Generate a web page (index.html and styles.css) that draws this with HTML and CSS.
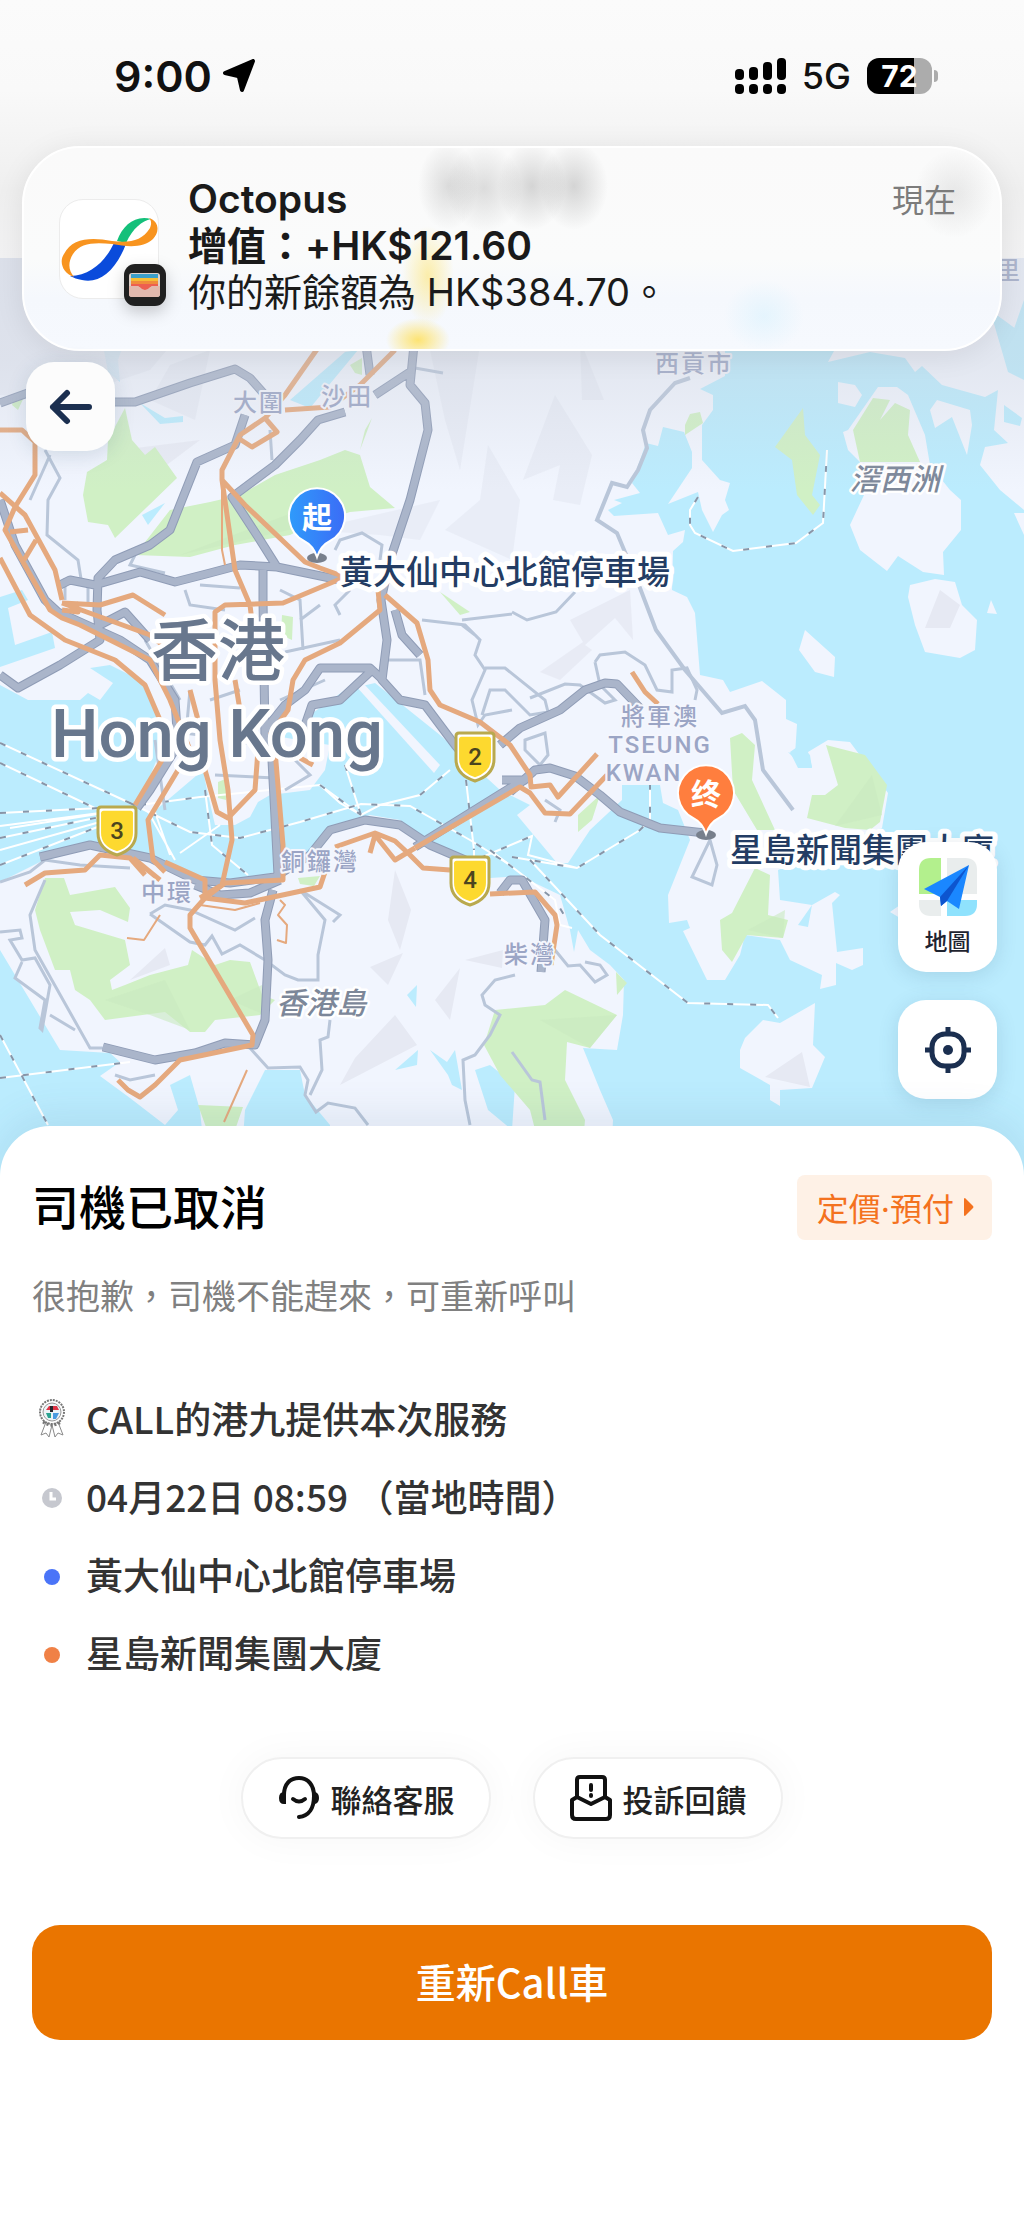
FILE: index.html
```html
<!DOCTYPE html>
<html lang="zh-HK">
<head>
  <meta charset="UTF-8">
  <title>司機已取消</title>
  <meta name="viewport" content="width=device-width, initial-scale=1.0">
  <link rel="stylesheet" href="styles.css">
</head>
<body>
  <main class="screen">
    <section class="map-area">
      <svg class="map" viewBox="0 0 1024 1180" role="img" aria-label="香港地圖">
        <defs>
          <linearGradient id="pinBlue" x1="0" y1="0" x2="1" y2="0">
            <stop offset="0" stop-color="#2f9bfb"/>
            <stop offset="1" stop-color="#3b6cf6"/>
          </linearGradient>
          <path id="shield" d="M-19 -21 Q-19 -24 -16 -24 H16 Q19 -24 19 -21 V2 Q19 18 0 24 Q-19 18 -19 2 Z"/>
          <path id="pin" d="M0 41 C-3 32 -7 28 -13 25 A28 28 0 1 1 13 25 C7 28 3 32 0 41 Z"/>
          <path id="highwayNorth" d="M0 403 L50 385 M110 402 L135 402 190 383 235 369 250 378 265 395 M245 415 L235 445 197 462 170 530 150 545 115 560 98 578 97 610 100 640 60 665 18 688 0 675 M366 345 L370 375 M414 345 L410 385 425 403 428 430 410 500 390 560 381 600 387 640 382 680 400 700 425 705 455 745 480 775 M410 372 L375 395 M345 412 L318 420 300 440 275 465 232 497 260 540 277 567 340 580 M60 585 L70 580 95 585 140 572 175 582 210 573 240 565 277 567 M263 570 V600 L265 740 272 760 278 875 M0 500 L15 545 45 600 58 612 120 640 150 660 175 700 178 745 150 790 137 808 M100 625 L125 612 150 640"/>
          <path id="highwaySouth" d="M265 730 L285 705 305 690 320 668 370 668 383 680 M300 740 L312 705 340 700 370 672 M395 610 L402 635 420 655 M500 745 L520 728 560 710 585 690 605 683 617 684 640 708 M510 792 L535 770 550 768 575 776 600 795 620 812 660 828 705 833 M502 780 L525 780 510 788 415 847 M40 857 L90 845 150 858 195 880 230 883 275 877 310 855 330 830 365 820 400 825 430 845 465 860 M195 885 L220 895 250 893 280 880 M500 893 L510 880 522 880 545 920 541 972 M273 890 L265 920 268 960 265 1020 255 1045 225 1043 195 1053 155 1060 103 1047"/>
        </defs>
        <rect width="1024" height="1180" fill="#bbecfe"/>

        <!-- land -->
        <g fill="#f1f5fe">
          <path d="M0 240 H725 V376 L700 389 713 395 713 410 702 425 702 460 720 480 730 483 725 500 729 510 722 515 713 532 702 510 698 492 668 504 692 468 692 452 684 432 663 427 658 446 646 443 632 483 640 493 614 500 622 503 608 510 614 516 658 513 668 535 685 530 683 542 673 551 672 590 687 597 695 613 700 675 723 680 730 692 762 681 786 700 786 719 797 724 795 755 788 752 804 768 812 767 808 752 828 740 850 742 888 793 882 828 868 832 778 870 780 900 812 905 798 925 808 927 812 905 835 892 840 895 832 903 837 952 863 948 863 965 852 970 836 963 836 985 820 989 822 975 790 960 780 940 745 935 740 955 725 980 707 980 683 931 690 928 687 920 669 923 668 895 690 840 678 810 663 803 660 785 622 785 622 800 590 830 568 863 557 863 517 815 530 805 500 790 440 735 375 683 345 690 300 722 270 735 310 742 330 745 325 770 310 790 270 795 258 802 250 817 235 825 215 825 207 790 203 770 150 815 138 805 165 740 157 712 140 680 110 665 90 668 113 683 100 700 88 693 80 700 28 700 0 685 Z"/>
          <path d="M355 685 L363 683 440 765 434 773 Z"/>
          <path d="M0 882 L40 862 90 848 150 862 200 885 235 882 275 872 300 860 330 830 370 815 400 820 430 845 470 860 490 878 520 876 560 895 570 930 574 952 578 930 590 950 610 965 624 980 623 1015 617 1050 583 1048 600 1090 613 1120 610 1180 430 1180 330 1180 330 1125 305 1095 300 1070 265 1070 245 1110 240 1180 207 1180 200 1110 190 1075 170 1085 178 1110 165 1125 130 1098 100 1076 120 1062 110 1053 60 1050 30 1000 0 950 Z"/>
          <path d="M725 240 H1024 V300 L1010 340 1024 362 V510 L1000 490 980 465 985 447 1008 443 994 430 998 390 985 397 942 385 922 366 915 372 905 358 870 352 828 362 840 340 725 330 Z"/>
          <path d="M838 382 L855 385 862 395 855 407 838 403 Z M930 410 L937 400 970 410 972 425 967 455 952 417 935 428 Z"/>
          <path d="M848 430 L878 387 897 387 908 395 925 435 930 465 950 490 961 500 961 530 943 552 944 575 923 572 898 556 887 571 860 550 850 525 864 495 860 462 848 450 843 432 Z"/>
          <path d="M910 585 L935 579 955 582 962 605 977 620 975 650 960 658 925 652 915 625 908 597 Z M805 630 L835 657 834 677 815 672 799 650 Z M991 600 L997 614 987 613 Z M890 912 L900 905 900 918 Z M1014 513 H1024 V535 Z"/>
          <path d="M740 1050 L745 1038 763 1020 780 1023 815 1003 813 1045 825 1057 812 1088 780 1090 780 1106 770 1100 770 1085 740 1068 Z"/>
        </g>
        <g fill="#bbecfe">
          <path d="M0 597 L22 590 28 600 8 608 15 645 52 632 55 648 0 667 Z M102 340 L125 340 118 360 120 382 108 372 Z M140 403 L165 418 183 416 183 422 160 424 Z"/>
          <path d="M800 745 L810 755 812 768 798 768 790 752 Z M407 995 L417 985 416 1007 Z M395 1070 L418 1050 417 1065 Z M430 1050 L447 1062 455 1050 462 1090 452 1085 448 1075 Z M475 1070 L490 1065 515 1085 512 1130 488 1110 Z"/>
          <path d="M345 352 L358 350 310 408 290 400 Z M142 515 L165 503 148 525 Z M990 310 L1024 335 V380 L1008 372 Z M1004 405 L1022 418 1020 426 1004 422 Z"/>
        </g>

        <!-- relief -->
        <g fill="#e6e9f3">
          <path d="M0 240 H260 L150 370 60 400 0 395 Z" opacity=".7"/>
          <path d="M170 365 L210 350 195 420 150 400 Z M430 350 L480 345 460 470 445 420 Z M488 445 L520 500 512 560 445 530 480 500 Z M555 395 L592 455 580 505 553 500 560 465 523 480 Z M580 340 L604 400 582 400 Z M310 530 L440 500 420 540 380 535 Z" opacity=".7"/>
          <path d="M570 620 L630 590 633 640 615 618 585 645 592 650 560 680 540 672 583 642 Z M120 450 L200 440 160 470 Z" opacity=".8"/>
          <path d="M395 870 L411 910 400 950 388 920 Z M370 967 L403 953 388 985 Z M465 960 L503 950 502 968 Z M395 1015 L417 1045 340 1085 355 1058 Z M435 1000 L460 968 450 1020 Z M130 980 L165 948 170 965 Z M940 590 L960 605 950 628 925 628 Z M765 1077 L802 1052 810 1087 Z"/>
        </g>

        <!-- parks -->
        <g fill="#d0f0c5">
          <path d="M125 408 L132 440 145 455 155 447 177 478 115 538 108 525 88 522 83 495 87 472 107 460 108 440 Z"/>
          <path d="M135 555 L170 510 210 502 240 495 275 475 320 460 345 450 360 455 370 487 395 508 350 512 310 525 290 535 235 545 190 557 Z"/>
          <path d="M45 878 L64 878 70 895 115 887 130 908 128 922 100 910 70 912 75 925 125 940 130 965 110 980 112 990 125 985 150 975 188 965 192 950 215 965 230 960 250 962 262 995 275 1000 260 1015 215 1020 205 1032 190 1032 165 1012 105 1020 90 1000 75 990 70 970 55 970 40 930 35 910 Z"/>
          <path d="M730 738 L742 733 755 745 752 780 775 830 757 830 733 790 Z M826 745 L865 755 887 785 880 822 870 830 845 828 807 818 812 795 825 795 838 785 Z"/>
          <path d="M755 868 L770 875 768 915 788 920 783 938 747 935 732 962 722 950 720 920 732 913 Z M578 815 L600 795 592 820 578 832 Z"/>
          <path d="M495 1010 L545 1005 565 990 617 1015 590 1048 567 1042 565 1080 585 1120 580 1180 548 1180 530 1110 500 1075 484 1045 Z M616 972 L627 983 617 995 Z"/>
          <path d="M803 408 L805 435 820 455 812 495 820 505 813 515 797 495 792 460 775 447 Z M873 398 L890 400 880 420 895 403 910 410 908 435 920 462 860 462 853 430 Z M685 425 L690 414 700 412 703 423 685 435 Z"/>
          <path d="M350 365 L362 358 362 375 355 373 Z M372 418 L365 430 360 450 Z M15 395 L25 395 18 410 12 405 Z M282 615 L293 617 292 640 281 635 Z M218 782 L228 778 226 800 218 798 Z M298 878 L320 876 314 886 300 884 Z M198 1105 L243 1107 235 1130 207 1130 Z M440 592 L460 615 470 612 Z"/>
        </g>
        <g fill="#c9e9bf" opacity=".6">
          <path d="M105 1000 L165 980 190 1030 150 1015 Z M230 1000 L262 985 265 1015 Z M835 826 L872 775 882 815 Z M590 1048 L540 1020 617 1015 Z M748 930 L785 910 783 938 Z M180 555 L300 510 310 525 Z"/>
        </g>

        <!-- ferry lines -->
        <g fill="none" stroke="#fff" stroke-width="2">
          <path d="M0 743 L130 803 M0 763 L120 820 M0 813 L100 808 M0 826 L100 813 M0 838 L100 817 M0 850 L100 822 M0 865 L100 826 M10 828 L110 812 M140 805 L200 797 320 785 340 803 361 815"/>
          <path d="M130 803 L190 832 240 838 300 822 361 804 410 806 470 840 510 865 M320 785 L361 815 M345 765 L361 815 380 805 420 795 450 770 M466 780 L474 850 474 865"/>
          <path d="M150 815 L175 860 M155 812 L170 855 M205 790 L212 845 248 875 M180 853 L220 825"/>
          <path d="M480 858 L532 836 528 855 577 868 640 830 650 820 650 785 M512 857 L577 868 M490 850 L555 900 560 925 572 928 M530 860 L600 935 688 1003 768 1005 778 1018"/>
          <path d="M698 497 L690 510 690 525 695 533 733 551 796 543 823 523 827 450 M0 1035 L48 1125 M0 1078 L130 1062"/>
        </g>
        <g fill="none" stroke="#8795a8" stroke-width="2" stroke-dasharray="6 17">
          <path d="M0 743 L130 803 M0 763 L120 820 M0 813 L100 808 M0 838 L100 817 M0 865 L100 826 M140 805 L200 797 M130 803 L190 832 240 838 300 822 361 804 410 806 470 840 510 865"/>
          <path d="M320 785 L361 815 M345 765 L361 815 M420 795 L450 770 M466 780 L474 850 M205 790 L212 845 248 875 M480 858 L532 836 M512 857 L577 868 640 830 650 820 650 785 M490 850 L555 900 572 928 M530 860 L600 935 688 1003 768 1005 778 1018"/>
          <path d="M698 497 L690 510 690 525 695 533 733 551 796 543 823 523 827 450 M0 1035 L48 1125 M0 1078 L130 1062"/>
        </g>

        <!-- minor roads -->
        <g fill="none" stroke="#b9c6d9" stroke-width="3">
          <path d="M690 378 L675 383 650 410 643 430 647 448 638 470 627 487 612 483 597 520 617 533 640 588 656 630 685 670 722 713 745 706 755 720 763 770 793 810" stroke-width="4"/>
          <path d="M512 612 L527 620 556 612 575 592 M422 620 L465 625 480 640 475 655 485 670 472 700 478 725 485 715 512 710 M462 620 L512 614 M462 625 L475 635 M485 668 L505 668 545 700 548 712 530 715 505 690 490 690 482 715 M385 660 L420 660 425 695"/>
          <path d="M595 662 L600 655 625 652 645 665 657 690 672 692 672 670 687 668 697 690 695 700 M595 662 L600 685 615 700 605 703 580 685 565 684 530 698 M525 740 L545 733 548 755 540 765 525 750 Z"/>
          <path d="M45 450 L60 478 48 500 47 535 78 560 82 585 M50 455 L30 500 M65 578 V600 M88 580 V605 M145 640 L180 700 M135 555 L130 565 165 573 M185 590 L190 605 225 610 M200 585 L240 588 M280 590 L300 600 303 650 M320 605 L300 620 M340 615 L335 605 350 590 M285 652 L340 640 M280 700 L325 680 M335 550 L340 540 362 533 382 545 380 560 M415 368 L443 373 M270 430 L272 460"/>
          <path d="M45 880 L30 915 35 950 90 1048 103 1048 M0 932 L20 930 22 938 10 940 22 960 35 958 50 985 42 1030 40 1028 45 1000 15 978 22 962 M50 1015 L75 1030 M0 882 L30 872 45 860 80 865 130 868 M150 914 L165 905 190 910 235 930 255 918 M150 914 L190 942 205 945 212 936 222 954 240 945 265 960 285 975 298 980 318 980 318 955 325 920 300 890 340 915 333 922"/>
          <path d="M250 1048 L268 1068 300 1067 308 1080 305 1095 316 1112 328 1103 355 1108 368 1125 M330 1020 L328 1037 320 1040 322 1070 310 1095 M115 1075 L130 1080 155 1075 M515 975 L495 980 482 995 485 1005 500 1015 490 1035 475 1055 463 1060 465 1100 470 1125 M512 1052 L532 1080 540 1082 545 1120 M710 840 L692 877 712 885 717 865 Z M555 950 L568 966 580 965 595 982 607 975 600 965 585 962 M545 800 L560 810 555 822"/>
          <path d="M155 740 L165 810 M190 690 L185 745 M210 700 L240 690 M215 775 L275 778 M285 750 L310 775 285 790 M160 730 L200 735 M235 715 L245 745"/>
        </g>

        <!-- highways -->
        <g fill="none" stroke="#8f9cb6" stroke-width="9" stroke-linejoin="round">
          <use href="#highwayNorth"/>
          <use href="#highwaySouth"/>
        </g>
        <g fill="none" stroke="#aab5ca" stroke-width="7" stroke-linejoin="round">
          <use href="#highwayNorth"/>
          <use href="#highwaySouth"/>
        </g>

        <!-- main roads -->
        <g fill="none" stroke="#e5a97e" stroke-width="5" stroke-linejoin="round">
          <path d="M320 345 L285 395 265 418 240 435 222 470 222 480 235 570 250 605 253 630 M395 350 L360 385 330 407 285 410 M265 418 L277 432 252 447 238 438 M222 480 L245 505 305 562 320 568 345 577 283 603 225 605 215 612 215 680 220 740 228 790 232 840 222 885 200 898 M378 590 L380 610 340 643 305 660 293 680 288 710 270 735 M385 595 L417 623 428 660 430 690 440 705 480 722 510 745 530 775 531 787 550 785 558 797 597 754 M415 848 L520 787 530 793 545 813 570 814 607 775"/>
          <path d="M0 430 L22 430 35 442 35 475 15 507 5 530 50 610 62 618 80 625 150 660 170 700 190 750 M0 493 L25 515 55 570 62 600 M0 558 L30 615 65 640 115 660 145 685 160 720 M62 603 L100 605 133 595 165 615 M62 603 L150 635 175 655 M10 532 L28 530 M36 540 L24 560 M62 610 L78 612 75 602"/>
          <path d="M162 760 L135 805 M178 770 L148 820 153 860 165 872 M205 770 L217 812 228 818 255 790 258 750 M275 750 L283 845 283 880 225 883 205 898 190 915 190 928 253 1035 252 1045 180 1060 155 1085 140 1097 128 1090 118 1080 M25 885 L45 873 85 870 100 855 130 858 145 875 M165 862 L205 880 205 898 245 903 320 887 325 872 M335 847 L375 833 395 841 410 855 423 868 450 870 M375 835 L370 853 M375 835 L395 860 415 848 M490 894 L535 892 555 915 557 925 551 965 M632 672 L645 692 658 704 M190 690 L202 735 M235 680 L240 710 M300 758 L313 765 M133 858 L160 880"/>
          <path d="M127 938 L144 940 160 915 M247 1070 L224 1122 M222 490 L222 550 225 565 M200 905 L235 910 260 903 M280 900 L285 905 278 915 287 925 286 943 277 940" stroke-width="2"/>
        </g>

        <!-- route shields -->
        <g stroke="#b9a94e" stroke-width="3" fill="#fff">
          <use href="#shield" transform="translate(475 757)"/>
          <use href="#shield" transform="translate(117 831)"/>
          <use href="#shield" transform="translate(470 881)"/>
        </g>
        <g fill="#fdd92f">
          <use href="#shield" transform="translate(475 757) scale(.84)"/>
          <use href="#shield" transform="translate(117 831) scale(.84)"/>
          <use href="#shield" transform="translate(470 881) scale(.84)"/>
        </g>
        <g class="shield-no">
          <text x="475" y="765">2</text>
          <text x="117" y="839">3</text>
          <text x="470" y="888">4</text>
        </g>

        <!-- place names -->
        <g class="district">
          <text x="259" y="411">大圍</text>
          <text x="347" y="405">沙田</text>
          <text x="694" y="372">西貢市</text>
          <text x="1009" y="279">里</text>
          <text x="660" y="725">將軍澳</text>
          <text x="660" y="753">TSEUNG</text>
          <text x="644" y="781">KWAN</text>
          <text x="320" y="870">銅鑼灣</text>
          <text x="167" y="901">中環</text>
          <text x="530" y="963">柴灣</text>
        </g>
        <g class="island">
          <text x="895" y="490">滘西洲</text>
          <text x="321" y="1014">香港島</text>
        </g>
        <g class="city">
          <text x="218" y="675">香港</text>
          <text x="217" y="757">Hong Kong</text>
        </g>

        <!-- pick-up and drop-off -->
        <ellipse cx="317" cy="558" rx="10" ry="5" fill="#777f8c"/>
        <use href="#pin" transform="translate(317 516)" fill="url(#pinBlue)" stroke="#fff" stroke-width="2"/>
        <ellipse cx="706" cy="835" rx="10" ry="5" fill="#777f8c"/>
        <use href="#pin" transform="translate(706 793)" fill="#ff7e3e" stroke="#fff" stroke-width="2"/>
        <g class="pin-text">
          <text x="317" y="528">起</text>
          <text x="706" y="805">终</text>
        </g>
        <g class="stop-name">
          <text x="340" y="584">黃大仙中心北館停車場</text>
          <text x="730" y="862">星島新聞集團大廈</text>
        </g>
      </svg>

      <div class="overlay">
        <header class="status-bar">
          <div class="status-left">
            <span class="time">9:00</span>
            <svg width="34" height="34" viewBox="0 0 34 34" aria-hidden="true">
              <path d="M31 2 L20 31 17 18 Q17 17 16 17 L3 14 Z" stroke="#000" stroke-width="4" stroke-linejoin="round"/>
            </svg>
          </div>
          <div class="status-right">
            <svg width="51" height="36" viewBox="0 0 51 36" aria-hidden="true">
              <rect x="0" y="11" width="9" height="11" rx="4"/>
              <rect x="14" y="9" width="9" height="13" rx="4"/>
              <rect x="28" y="4" width="9" height="18" rx="4"/>
              <rect x="42" y="0" width="9" height="22" rx="4"/>
              <rect x="0" y="26" width="9" height="10" rx="4"/>
              <rect x="14" y="26" width="9" height="10" rx="4"/>
              <rect x="28" y="26" width="9" height="10" rx="4"/>
              <rect x="42" y="26" width="9" height="10" rx="4"/>
            </svg>
            <span class="network">5G</span>
            <div class="battery">72</div>
          </div>
        </header>

        <article class="notification">
          <div class="app-icon">
            <svg width="98" height="98" viewBox="0 0 98 98" aria-hidden="true">
              <path d="M57 41 C63 25 75 15 91 19 C82 21 73 28 66 43 Z" fill="#14c07a"/>
              <path d="M10 76 C31 76 46 60 54 43 L66 44 C56 70 40 84 22 80 C17 79 14 78 10 76 Z" fill="#0a4bdb"/>
              <path d="M14 77 C2 73 -1 61 4 54 C12 38 31 37 52 41 C70 43 82 41 90 28 C92 23 91 20 89 18 C99 21 100 32 93 39 C84 48 68 47 52 44 C34 42 20 43 13 54 C8 62 8 70 14 77 Z" fill="#f8941f"/>
            </svg>
            <svg class="wallet" width="42" height="42" viewBox="0 0 42 42" aria-hidden="true">
              <rect width="42" height="42" rx="11" fill="#202020"/>
              <rect x="5" y="9" width="31" height="24" rx="3" fill="#ddd2cb"/>
              <rect x="7" y="10" width="27" height="4" fill="#3b9fc9"/>
              <rect x="7" y="14" width="27" height="3" fill="#f5bd35"/>
              <rect x="7" y="17" width="27" height="3" fill="#f08b3c"/>
              <path d="M7 20 H34 V22 H29 C26 22 25 26 21 26 C17 26 16 22 13 22 H7 Z" fill="#ed5f50"/>
              <path d="M5 22 H13 C16 22 17 26 21 26 C25 26 26 22 29 22 H36 V30 Q36 33 33 33 H8 Q5 33 5 30 Z" fill="#e2b9ae"/>
            </svg>
          </div>
          <div class="notification-body">
            <h2>Octopus</h2>
            <p class="strong">增值：+HK$121.60</p>
            <p>你的新餘額為 HK$384.70。</p>
          </div>
          <time class="notification-time">現在</time>
        </article>

        <div class="map-controls">
          <button class="map-button back" type="button" aria-label="返回">
            <svg width="44" height="36" viewBox="0 0 44 36" fill="none" stroke="#1b2f50" stroke-width="6" stroke-linecap="round" stroke-linejoin="round" aria-hidden="true">
              <path d="M4 18 H40 M18 4 L4 18 18 32"/>
            </svg>
          </button>
          <div class="side-buttons">
            <button class="map-button" type="button">
              <svg width="58" height="58" viewBox="0 0 58 58" aria-hidden="true">
                <path d="M12 0 H22 V36 H0 V12 Q0 0 12 0 Z" fill="#b3f08d"/>
                <path d="M28 0 H46 Q58 0 58 12 V36 H28 Z" fill="#e9eded"/>
                <path d="M0 42 H22 V58 H12 Q0 58 0 46 Z" fill="#e9eded"/>
                <path d="M28 42 H58 V46 Q58 58 46 58 H28 Z" fill="#8fe2fd"/>
                <path d="M50 7 L5 31 21 39 22 48 28 43 40 51 Z" fill="#1a87ff"/>
                <path d="M50 7 L21 39 22 48 28 43 Z" fill="#0d55cf"/>
              </svg>
              <span>地圖</span>
            </button>
            <button class="map-button locate" type="button" aria-label="定位">
              <svg width="48" height="48" viewBox="0 0 48 48" aria-hidden="true">
                <rect x="8" y="8" width="32" height="32" rx="13" fill="none" stroke="#1b2f50" stroke-width="5"/>
                <path d="M24 1 V8 M24 40 V47 M1 24 H8 M40 24 H47" stroke="#1b2f50" stroke-width="5"/>
                <circle cx="24" cy="24" r="5" fill="#1b2f50"/>
              </svg>
            </button>
          </div>
        </div>
      </div>
    </section>

    <section class="sheet">
      <div class="sheet-head">
        <h1>司機已取消</h1>
        <button class="price-tag" type="button">定價·預付
          <svg width="10" height="18" viewBox="0 0 10 18" aria-hidden="true"><path d="M0 1 Q0 0 1 0 L9 8 Q10 9 9 10 L1 18 Q0 18 0 17 Z" fill="#f4721e"/></svg>
        </button>
      </div>
      <p class="subtitle">很抱歉，司機不能趕來，可重新呼叫</p>

      <ul class="trip">
        <li>
          <svg width="28" height="40" viewBox="0 0 28 40" aria-hidden="true">
            <path d="M8 24 L3 37 8 35 11 39 14 27 17 39 20 35 25 37 20 24 Z" fill="#fff" stroke="#8a8a8a"/>
            <circle cx="14" cy="14" r="12" fill="#fff" stroke="#777" stroke-width="2" stroke-dasharray="2 1"/>
            <circle cx="14" cy="14" r="9" fill="#eef3f6" stroke="#999"/>
            <path d="M8 12 L11 8 H19 L21 12 Z" fill="#dd3446"/>
            <path d="M12 8 H15 V14 H12 Z" fill="#26262c"/>
            <path d="M8 15 H13 V20 H10 Z" fill="#2aa390"/>
            <path d="M15 15 H21 L18 21 H15 Z" fill="#4a9be0"/>
            <path d="M5 24 Q14 30 23 24" fill="none" stroke="#777" stroke-width="3" stroke-dasharray="2 2"/>
          </svg>
          <span>CALL的港九提供本次服務</span>
        </li>
        <li>
          <svg width="28" height="40" viewBox="0 0 28 40" aria-hidden="true">
            <circle cx="14" cy="22" r="10" fill="#c6c8cf"/>
            <path d="M13 16 V23 H18" fill="none" stroke="#fff" stroke-width="3"/>
          </svg>
          <span>04月22日 08:59 （當地時間）</span>
        </li>
        <li>
          <svg width="28" height="40" viewBox="0 0 28 40" aria-hidden="true"><circle cx="14" cy="23" r="8" fill="#4a74f8"/></svg>
          <span>黃大仙中心北館停車場</span>
        </li>
        <li>
          <svg width="28" height="40" viewBox="0 0 28 40" aria-hidden="true"><circle cx="14" cy="23" r="8" fill="#f08146"/></svg>
          <span>星島新聞集團大廈</span>
        </li>
      </ul>

      <div class="help-row">
        <button class="pill" type="button">
          <svg width="42" height="46" viewBox="0 0 42 46" fill="none" stroke="#111" stroke-width="4" stroke-linecap="round" aria-hidden="true">
            <path d="M6 20 C6 9 12 3 21 3 C30 3 36 10 36 21 C36 33 31 41 21 42"/>
            <path d="M15 24 Q21 29 27 24"/>
            <path d="M8 17 V29 H6 Q1 29 1 23 Q1 17 6 17 Z M35 17 V29 H37 Q41 28 41 23 Q41 18 37 17 Z" fill="#111" stroke="none"/>
          </svg>
          聯絡客服
        </button>
        <button class="pill" type="button">
          <svg width="42" height="46" viewBox="0 0 42 46" fill="none" stroke="#111" stroke-width="4" stroke-linecap="round" stroke-linejoin="round" aria-hidden="true">
            <path d="M7 22 V5 Q7 2 10 2 H32 Q35 2 35 5 V22"/>
            <path d="M7 22 L2 25 V40 Q2 44 6 44 H36 Q40 44 40 40 V25 L35 22 21 29 Z"/>
            <path d="M21 10 V15 M21 20 V21"/>
          </svg>
          投訴回饋
        </button>
      </div>

      <button class="primary" type="button">重新Call車</button>
    </section>
  </main>
</body>
</html>
```
FILE: styles.css
```css
* {
  box-sizing: border-box;
}
body {
  margin: 0;
  background-color: #fff;
  color: #111;
  font-family: "Inter", "Noto Sans CJK TC", sans-serif;
}
h1, h2, p, ul {
  margin: 0;
  padding: 0;
}
button {
  border: none;
  cursor: pointer;
  font-family: "Noto Sans CJK TC", sans-serif;
}
svg {
  display: block;
  flex: none;
}

/* Map */
.map-area {
  display: grid;
}
.map,
.overlay {
  grid-area: 1 / 1;
}
.map {
  width: 100%;
  height: auto;
}
.map text {
  font-family: "Roboto", "Noto Sans CJK TC", sans-serif;
  text-anchor: middle;
  paint-order: stroke;
  stroke: #fff;
  stroke-linejoin: round;
}
.map .district text {
  font-size: 24px;
  font-weight: 500;
  letter-spacing: 2px;
  fill: #9ba5c5;
  stroke: #f4f6fd;
  stroke-width: 4px;
}
.map .island text {
  font-size: 30px;
  font-style: italic;
  font-weight: 500;
  fill: #7c8799;
  stroke-width: 5px;
}
.map .city text {
  font-size: 67px;
  font-weight: 500;
  fill: #68778d;
  stroke-width: 9px;
}
.map .shield-no text {
  font-size: 24px;
  font-weight: 500;
  fill: #4b451f;
  stroke: none;
}
.map .pin-text text {
  font-size: 30px;
  font-weight: 700;
  fill: #fff;
  stroke: none;
}
.map .stop-name text {
  font-size: 33px;
  font-weight: 500;
  text-anchor: start;
  fill: #233c63;
  stroke-width: 10px;
}

/* Everything that floats on the map */
.overlay {
  position: relative;
  display: flex;
  flex-direction: column;
  padding: 0 22px 81px;
  background: linear-gradient(#fbfbfb 0, #f9f9f9 90px, #efefef 190px, #f2f2f3 258px, rgba(200, 205, 215, 0.4) 258px, rgba(200, 205, 215, 0.35) 360px, rgba(200, 205, 215, 0) 490px);
}
.status-bar {
  display: flex;
  justify-content: space-between;
  align-items: center;
  height: 146px;
  padding: 6px 64px 0 92px;
}
.status-left,
.status-right {
  display: flex;
  align-items: center;
  gap: 10px;
}
.status-right {
  gap: 16px;
}
.time {
  font-size: 43px;
  font-weight: 600;
}
.network {
  font-size: 36px;
  font-weight: 500;
}
.battery {
  position: relative;
  width: 65px;
  height: 36px;
  margin-right: 6px;
  border-radius: 12px;
  background: linear-gradient(90deg, #000 72%, #acacac 72%);
  color: #fff;
  font-size: 30px;
  font-weight: 700;
  line-height: 36px;
  text-align: center;
}
.battery::after {
  content: "";
  position: absolute;
  top: 12px;
  right: -6px;
  width: 4px;
  height: 12px;
  border-radius: 0 6px 6px 0;
  background-color: #acacac;
}

/* Notification */
.notification {
  display: flex;
  align-items: center;
  gap: 29px;
  height: 205px;
  padding: 0 44px 0 35px;
  border: 2px solid #fff;
  border-radius: 58px;
  background:
    radial-gradient(ellipse 30px 44px at 424px 38px, rgba(60, 60, 60, 0.16), transparent),
    radial-gradient(ellipse 38px 44px at 460px 40px, rgba(60, 60, 60, 0.16), transparent),
    radial-gradient(ellipse 34px 44px at 508px 38px, rgba(60, 60, 60, 0.2), transparent),
    radial-gradient(ellipse 34px 44px at 550px 38px, rgba(60, 60, 60, 0.2), transparent),
    radial-gradient(ellipse 40px 44px at 930px 46px, rgba(60, 60, 60, 0.1), transparent),
    radial-gradient(ellipse 26px 50px at 404px 128px, rgba(255, 225, 90, 0.5), transparent),
    radial-gradient(ellipse 32px 22px at 394px 192px, rgba(255, 222, 80, 0.8), transparent),
    radial-gradient(ellipse 40px 36px at 740px 168px, rgba(190, 235, 255, 0.3), transparent),
    linear-gradient(#fafafa 0, #fafbfb 55%, #f5f8fd 75%, #f6f9fe 100%);
  box-shadow: 0 4px 30px rgba(0, 0, 0, 0.08);
}
.app-icon {
  position: relative;
  border: 1px solid #ececec;
  border-radius: 24px;
  background-color: #fff;
}
.wallet {
  position: absolute;
  right: -8px;
  bottom: -8px;
  filter: drop-shadow(0 6px 8px rgba(0, 0, 0, 0.2));
}
.notification-body {
  flex: 1;
  padding-bottom: 6px;
  font-size: 38px;
  line-height: 47px;
  color: #1a1a1a;
}
.notification-body h2,
.strong {
  font-size: 39px;
  font-weight: 600;
}
.notification-time {
  align-self: flex-start;
  padding-top: 28px;
  font-size: 32px;
  line-height: 50px;
  color: #7c7c7c;
}

/* Map buttons */
.map-controls {
  display: flex;
  flex: 1;
  justify-content: space-between;
  padding: 11px 5px 0 4px;
}
.side-buttons {
  display: flex;
  flex-direction: column;
  justify-content: flex-end;
  gap: 28px;
}
.map-button {
  display: flex;
  flex-direction: column;
  align-items: center;
  justify-content: center;
  gap: 8px;
  width: 99px;
  height: 130px;
  padding: 0;
  border-radius: 28px;
  background-color: #fff;
  box-shadow: 0 4px 20px rgba(40, 80, 110, 0.15);
  color: #1f2430;
  font-size: 23px;
  font-weight: 500;
  line-height: 32px;
}
.map-button.back {
  width: 89px;
  height: 89px;
  background-color: #fcfcfc;
}
.map-button.locate {
  height: 99px;
}

/* Bottom sheet */
.sheet {
  position: relative;
  margin-top: -54px;
  padding: 49px 32px 180px;
  border-radius: 50px 50px 0 0;
  background-color: #fff;
  box-shadow: 0 -8px 40px rgba(60, 100, 130, 0.12);
  font-family: "Noto Sans CJK TC", sans-serif;
}
.sheet-head {
  display: flex;
  align-items: flex-start;
  justify-content: space-between;
}
h1 {
  font-size: 47px;
  font-weight: 500;
  line-height: 60px;
  color: #000;
}
.price-tag {
  display: flex;
  align-items: center;
  gap: 10px;
  height: 65px;
  padding: 0 18px 2px 20px;
  border-radius: 8px;
  background-color: #fef1e6;
  color: #f4721e;
  font-family: "Inter", "Noto Sans CJK TC", sans-serif;
  font-size: 32px;
}
.subtitle {
  margin-top: 30px;
  font-size: 34px;
  line-height: 50px;
  color: #808080;
}
.trip {
  margin-top: 59px;
  list-style: none;
}
.trip li {
  display: flex;
  align-items: center;
  gap: 20px;
  height: 78px;
  padding-left: 6px;
  font-size: 37px;
  font-weight: 500;
  color: #333;
}
.help-row {
  display: flex;
  justify-content: center;
  gap: 42px;
  margin-top: 66px;
}
.pill {
  display: flex;
  align-items: center;
  justify-content: center;
  gap: 11px;
  width: 250px;
  height: 82px;
  padding: 0;
  border: 2px solid #f0f0f0;
  border-radius: 41px;
  background-color: #fff;
  box-shadow: 0 0 40px rgba(0, 0, 0, 0.04);
  color: #222;
  font-size: 31px;
  font-weight: 500;
}
.primary {
  width: 100%;
  height: 115px;
  margin-top: 86px;
  padding: 0 0 4px;
  border-radius: 28px;
  background-color: #ea7500;
  color: #fff;
  font-size: 40px;
  font-weight: 500;
}
```
